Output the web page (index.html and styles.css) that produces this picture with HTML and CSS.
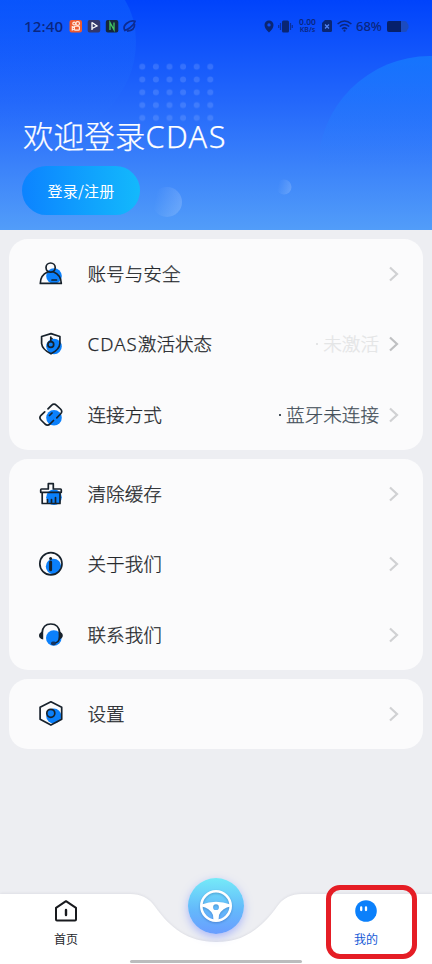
FILE: index.html
```html
<!DOCTYPE html>
<html lang="zh-CN">
<head>
<meta charset="utf-8">
<meta name="viewport" content="width=device-width">
<title>CDAS</title>
<link rel="stylesheet" href="styles.css">
</head>
<body>
<div class="app">
  <header class="hero">
    <svg class="hero-art" viewBox="0 0 432 230" aria-hidden="true">
      <defs>
        <linearGradient id="left" x1="0" y1="0" x2="0" y2="1"><stop offset="0" stop-color="#1c7dff" stop-opacity=".3"/><stop offset="1" stop-color="#2877ff" stop-opacity="0"/></linearGradient>
        <linearGradient id="right" x1="0" y1="0" x2="0" y2="1"><stop offset="0" stop-color="#1684ff" stop-opacity=".65"/><stop offset=".5" stop-color="#2a84ff" stop-opacity="0"/></linearGradient>
        <linearGradient id="bubble" x1="0" y1=".4" x2="1" y2=".6"><stop offset=".1" stop-color="#fff" stop-opacity="0"/><stop offset="1" stop-color="#fff" stop-opacity=".17"/></linearGradient>
        <pattern id="dots" x="135.500" y="60.300" width="13.600" height="12.800" patternUnits="userSpaceOnUse"><circle cx="6.800" cy="6.400" r="3" fill="#8fb4ff" fill-opacity=".25"/></pattern>
      </defs>
      <path d="M0 0H125Q136 18 136 42Q136 80 106 112Q85 130 0 135Z" fill="url(#left)"/>
      <circle cx="430" cy="168" r="112" fill="url(#right)"/>
      <rect x="135.500" y="60.300" width="81.600" height="64" fill="url(#dots)"/>
      <circle cx="167" cy="202" r="15" fill="url(#bubble)"/>
      <circle cx="284" cy="187" r="7.500" fill="url(#bubble)"/>
    </svg>
    <div class="status">
      <span class="clock">12:40</span>
      <svg class="apps" viewBox="0 0 68 14" aria-hidden="true">
        <rect x=".5" y="1" width="12.500" height="12.500" rx="2" fill="#ee5b2f"/>
        <g fill="none" stroke="#ffe9df" stroke-width="1.200"><circle cx="5.200" cy="4.600" r="1.400"/><circle cx="8.700" cy="4.500" r="1.800"/><rect x="5.400" y="7.200" width="5" height="4" rx="1"/><path d="M5.400 8.400 3.300 7.700V11L5.400 10.200"/></g>
        <rect x="18.700" y="1" width="12.500" height="12.500" rx="2" fill="#34386a"/>
        <path d="M23 3.200V11M23 3.500 28 7 23 9.500" fill="none" stroke="#fff" stroke-width="1.300"/>
        <rect x="36.800" y="1" width="12.500" height="12.500" rx="2" fill="#15273d"/>
        <path d="M41 11V3.600L45 10.800V3.400" fill="none" stroke="#42c464" stroke-width="1.300"/>
        <g fill="none" stroke="#0d2b91" stroke-width="1.700"><path d="M56 12Q53.500 8 57.500 4.500Q62 1 66 2.300Q65 6 61 8.800Q58 11 55 11.800"/><path d="M58 12.200Q66 11.500 65.500 5"/></g>
      </svg>
      <svg class="place" viewBox="0 0 10 13" aria-hidden="true"><path fill-rule="evenodd" d="M5 .5A4.500 4.500 0 0 1 9.500 5Q9.500 8.500 5 12.500Q.5 8.500 .5 5A4.500 4.500 0 0 1 5 .5ZM5 3.200A1.700 1.700 0 1 0 5 6.600A1.700 1.700 0 1 0 5 3.200Z" fill="#0a2673"/></svg>
      <svg class="vibrate" viewBox="0 0 15 13" aria-hidden="true"><rect x="4" y=".5" width="7" height="12" rx="1.500" fill="#0a2673"/><path d="M2.500 3V10M.7 5V8M12.500 3V10M14.300 5V8" stroke="#0a2f9c" stroke-width="1.200"/></svg>
      <span class="speed"><span>0.00</span><span>KB/s</span></span>
      <svg class="sim" viewBox="0 0 10 12" aria-hidden="true"><path d="M3 0H8.500Q10 0 10 1.500V10.500Q10 12 8.500 12H1.500Q0 12 0 10.500V3Z" fill="#0a2673"/><path d="M3 4.500 7 8.500M7 4.500 3 8.500" stroke="#5184f5" stroke-width="1.300"/></svg>
      <svg class="wifi" viewBox="0 0 15 12" aria-hidden="true"><g fill="none" stroke="#0a2680" stroke-width="1.600"><path d="M.6 4Q7.500-2 14.400 4M2.800 6.500Q7.500 2.500 12.200 6.500M5 9Q7.500 6.800 10 9"/></g><circle cx="7.500" cy="10.700" r="1.100" fill="#0a2680"/></svg>
      <span class="percent">68%</span>
      <svg class="battery" viewBox="0 0 22 11" aria-hidden="true"><path d="M2 0H18Q20 0 20.500 2.500L21.500 4V7L20.500 8.500Q20 11 18 11H2Q0 11 0 9V2Q0 0 2 0Z" fill="#1b4bc0"/><path d="M2 0H14V11H2Q0 11 0 9V2Q0 0 2 0Z" fill="#06206b"/></svg>
    </div>
    <h1 class="title">欢迎登录<span class="title-latin">CDAS</span></h1>
    <button class="login">登录/注册</button>
  </header>

  <main class="menu">
    <section class="card">
      <div class="row">
        <svg class="icon" viewBox="0 0 26 26"><circle class="spot" cx="16" cy="15" r="7.800"/><g class="line"><circle cx="12.600" cy="6.600" r="4.600"/><path d="M9.500 11Q2.500 14 2.300 22.400H23.300Q23 14 15.700 11M14 19H18.500"/></g></svg>
        <span class="label">账号与安全</span>
        <svg class="chevron" viewBox="0 0 10 16"><path d="M1 1.500 8 8 1 14.500"/></svg>
      </div>
      <div class="row">
        <svg class="icon" viewBox="0 0 26 26"><circle class="spot" cx="16" cy="15.500" r="7.800"/><g class="line"><path d="M13 2.600 21.900 5.500V12.500Q21.500 18.500 13 22.800Q4.200 18.500 3.600 12.500V5.500Z"/><circle cx="12.800" cy="13.500" r="2.900"/><path d="M12.800 10.500V6M12.800 7.500H14"/></g></svg>
        <span class="label"><span class="latin">CDAS</span>激活状态</span>
        <span class="value muted"><i class="dot"></i><span>未激活</span></span>
        <svg class="chevron dark" viewBox="0 0 10 16"><path d="M1 1.500 8 8 1 14.500"/></svg>
      </div>
      <div class="row">
        <svg class="icon" viewBox="0 0 26 26"><circle class="spot" cx="16" cy="15.800" r="7.800"/><g class="line"><path d="M10 6.800 13.500 3.300Q16 1 18.500 3.300L22.500 7Q25 9.500 22.500 12L18.800 15.800M6.700 9.800 3 13.300Q.8 15.800 3 18L7 22Q9.500 24.200 12 22L15.500 18.500M11.500 13.500 14 11"/></g></svg>
        <span class="label">连接方式</span>
        <span class="value"><i class="dot"></i><span>蓝牙未连接</span></span>
        <svg class="chevron" viewBox="0 0 10 16"><path d="M1 1.500 8 8 1 14.500"/></svg>
      </div>
    </section>

    <section class="card">
      <div class="row">
        <svg class="icon" viewBox="0 0 26 26"><circle class="spot" cx="16" cy="16.200" r="7.800"/><g class="line"><path d="M10.300 8V2.700H15.300V8H22.500Q23.300 8 23.300 9V11.300H2.700V9Q2.700 8 3.500 8ZM4.200 11.500V22.500H22V11.500M9.500 22V18.500M13.500 22V18.500M17.500 22V16.500"/></g></svg>
        <span class="label">清除缓存</span>
        <svg class="chevron" viewBox="0 0 10 16"><path d="M1 1.500 8 8 1 14.500"/></svg>
      </div>
      <div class="row">
        <svg class="icon" viewBox="0 0 26 26"><circle class="spot" cx="15.500" cy="15.500" r="7.700"/><g class="line"><circle cx="12.900" cy="12.700" r="11.100"/></g><path d="M12.600 11V18.800" stroke="#17212b" stroke-width="3" stroke-linecap="round"/><circle cx="12.600" cy="7.500" r="1.500" fill="#17212b"/></svg>
        <span class="label">关于我们</span>
        <svg class="chevron" viewBox="0 0 10 16"><path d="M1 1.500 8 8 1 14.500"/></svg>
      </div>
      <div class="row">
        <svg class="icon" viewBox="0 0 26 26"><circle class="spot" cx="15.800" cy="16" r="7.800"/><g class="line"><path d="M4 11Q4.800 2 12.800 2Q21 2 21.800 11M21.800 15Q21 21 16 21"/></g><path d="M5.200 9.300V17.500Q1 16.500 1 13.500Q1 10.500 5.200 9.300ZM20.600 9.300V17.500Q24.800 16.500 24.800 13.500Q24.800 10.500 20.600 9.300Z" fill="#17212b"/><rect x="13" y="19.500" width="5" height="3.800" rx="1.800" fill="#17345f"/></svg>
        <span class="label">联系我们</span>
        <svg class="chevron" viewBox="0 0 10 16"><path d="M1 1.500 8 8 1 14.500"/></svg>
      </div>
    </section>

    <section class="card">
      <div class="row">
        <svg class="icon" viewBox="0 0 26 26"><circle class="spot" cx="15.800" cy="15" r="7.600"/><g class="line"><path d="M12.900 .8 23.700 6.300V18.300L12.900 24.100 2.100 18.300V6.300Z"/><circle cx="12.800" cy="12.300" r="4"/></g></svg>
        <span class="label">设置</span>
        <svg class="chevron" viewBox="0 0 10 16"><path d="M1 1.500 8 8 1 14.500"/></svg>
      </div>
    </section>
  </main>

  <nav class="tabs">
    <svg class="tabs-shape" viewBox="0 0 432 70" aria-hidden="true"><path d="M0 0H130Q146 0 154.500 12C170 34 188 48 216 48S262 34 277.500 12Q286 0 302 0H432V70H0Z"/></svg>
    <a class="tab">
      <svg class="tab-icon" viewBox="0 0 24 24"><path d="M2 8.800 12 2.200 22 8.800V20.500Q22 21.500 21 21.500H3Q2 21.500 2 20.500Z" fill="none" stroke="#181a1e" stroke-width="2" stroke-linejoin="round"/><path d="M12 11V16" stroke="#181a1e" stroke-width="2.400" stroke-linecap="round"/></svg>
      <span>首页</span>
    </a>
    <a class="drive">
      <svg viewBox="0 0 34 34"><circle cx="17" cy="17" r="14.700" fill="none" stroke="#fff" stroke-width="2.600"/><path fill-rule="evenodd" d="M2.500 15.500Q17 10 31.500 15.500V17.500Q23.500 18.500 20 26L19.500 31.500H14.500L14 26Q10.500 18.500 2.500 17.500ZM17 15.300A2.900 2.900 0 1 0 17 21.100A2.900 2.900 0 1 0 17 15.300Z" fill="#fff"/></svg>
    </a>
    <a class="tab active">
      <svg class="tab-icon" viewBox="0 0 24 24"><circle cx="12" cy="12" r="10.800" fill="#0b80fb"/><path d="M7.200 8.500V11M12 8.500V11" stroke="#fff" stroke-width="2.300" stroke-linecap="round"/></svg>
      <span>我的</span>
      <i class="highlight"></i>
    </a>
    <i class="home-bar"></i>
  </nav>
</div>
</body>
</html>
```

FILE: styles.css
```css
* { box-sizing: border-box; }

body {
  margin: 0;
  font-family: "Noto Sans CJK SC", sans-serif;
  color: #24272b;
}

.app {
  display: flex;
  flex-direction: column;
  width: 432px;
  height: 964px;
  overflow: hidden;
  background: #edeef2;
}

svg { display: block; flex: none; }

.hero {
  position: relative;
  display: flex;
  flex-direction: column;
  align-items: flex-start;
  height: 230px;
  padding: 16px 22px 0;
  background: linear-gradient(#0043fb 0%, #2468fb 45%, #529df9 100%);
}

.hero-art { position: absolute; inset: 0; width: 432px; height: 230px; }

.status {
  position: relative;
  display: flex;
  align-items: center;
  width: 100%;
  height: 20px;
  color: #0a2680;
  font-family: "Noto Sans", sans-serif;
}

.clock {
  width: 46px;
  padding-left: 2px;
  font-size: 15px;
  font-weight: 500;
  line-height: 20px;
  letter-spacing: .2px;
}

.apps { width: 68px; height: 14px; margin-left: 1px; }
.place { width: 10px; height: 13px; margin-left: 127px; }
.vibrate { width: 15px; height: 13px; margin-left: 4px; }

.speed {
  display: flex;
  flex-direction: column;
  align-items: center;
  width: 21px;
  margin-left: 4px;
  font-size: 7px;
  font-weight: 600;
  line-height: 8px;
}

.speed span:first-child { font-size: 8.500px; }
.sim { width: 10px; height: 12px; margin-left: 4px; }
.wifi { width: 15px; height: 12px; margin-left: 5px; }
.percent { width: 30px; margin-left: 4px; font-size: 13px; font-weight: 500; white-space: nowrap; }
.battery { width: 22px; height: 11px; margin-left: 1px; }

.title {
  position: relative;
  height: 44px;
  margin: 77px 0 0 1px;
  color: #fff;
  font-size: 30.600px;
  font-weight: 300;
  line-height: 44px;
  white-space: nowrap;
  -webkit-text-stroke: .25px #fff;
}

.title-latin { font-family: "Noto Sans", sans-serif; letter-spacing: 1.500px; }

.login {
  position: relative;
  width: 118px;
  height: 49px;
  margin-top: 9px;
  padding: 0;
  border: 0;
  border-radius: 25px;
  background: linear-gradient(90deg, #0c83ff, #13b9fc);
  color: #fff;
  font: 400 15px/49px "Noto Sans CJK SC", sans-serif;
  letter-spacing: .2px;
}

.menu {
  display: flex;
  flex-direction: column;
  gap: 9px;
  padding: 9px 9px 0;
}

.card {
  border-radius: 19px;
  background: #fbfbfc;
}

.row {
  display: flex;
  align-items: center;
  height: 70.300px;
  padding: 0 24px 0 29px;
}

.icon { width: 26px; height: 26px; }
.spot { fill: #0b80fb; }
.line { fill: none; stroke: #17212b; stroke-width: 1.700; stroke-linejoin: round; stroke-linecap: round; }

.label {
  flex: 1;
  margin-left: 23.500px;
  padding-bottom: 2px;
  font-size: 18.600px;
  font-weight: 300;
  line-height: 28px;
  white-space: nowrap;
  -webkit-text-stroke: .25px currentColor;
}

.latin { font-family: "Noto Sans", sans-serif; letter-spacing: 1.100px; }

.value {
  display: flex;
  align-items: center;
  gap: 5px;
  margin-right: 10px;
  color: #45505a;
  font-size: 18.600px;
  font-weight: 300;
  line-height: 28px;
  -webkit-text-stroke: .25px currentColor;
}

.value span { padding-bottom: 2px; }
.muted { color: #e4e5e6; }
.dot { width: 2px; height: 2px; background: currentColor; }

.chevron { width: 10px; height: 16px; }
.chevron path { fill: none; stroke: #d0d1d3; stroke-width: 2.200; }
.dark path { stroke: #bfc0c2; }

.tabs {
  position: relative;
  display: flex;
  justify-content: space-between;
  height: 70px;
  margin-top: auto;
  padding: 0 36px;
}

.tabs-shape { position: absolute; inset: 0; width: 432px; height: 70px; overflow: visible; }
.tabs-shape path { fill: #fff; filter: drop-shadow(0 -1px 1px rgba(60, 70, 90, .08)); }

.tab {
  position: relative;
  display: flex;
  flex-direction: column;
  align-items: center;
  width: 60px;
  padding-top: 5px;
  font-size: 12px;
  line-height: 18px;
}

.tab-icon { width: 24px; height: 24px; margin-bottom: 7px; }
.active { color: #1559d6; }

.drive {
  position: relative;
  display: flex;
  align-items: center;
  justify-content: center;
  width: 56px;
  height: 56px;
  margin-top: -16px;
  border-radius: 50%;
  background: linear-gradient(#75eaf8, #64bafb 55%, #6a9dff);
  box-shadow: 0 3px 9px rgba(105, 130, 255, .5);
}

.drive svg { width: 34px; height: 34px; filter: drop-shadow(0 1px 1px rgba(30, 80, 150, .4)); }

.highlight {
  position: absolute;
  left: -10px;
  top: -9px;
  width: 91px;
  height: 74px;
  border: 5px solid #e51d25;
  border-radius: 14px;
}

.home-bar {
  position: absolute;
  left: 130px;
  bottom: 1px;
  width: 172px;
  height: 3px;
  border-radius: 2px;
  background: #bbbcbd;
}
```
